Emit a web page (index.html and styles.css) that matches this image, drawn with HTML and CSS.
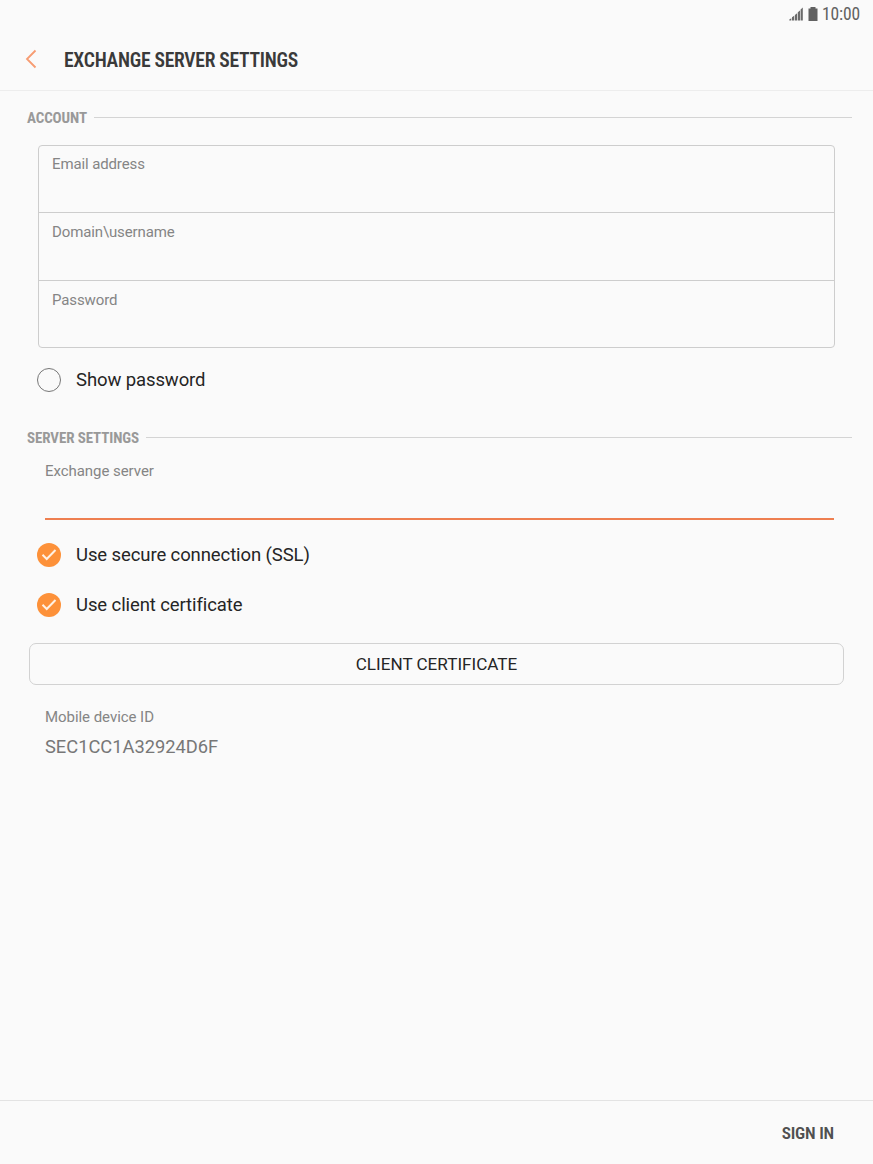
FILE: index.html
```html
<!DOCTYPE html>
<html lang="en">
<head>
    <meta charset="UTF-8">
    <meta name="viewport" content="width=device-width, initial-scale=1.0">
    <title>Exchange server settings</title>
    <link rel="stylesheet" href="styles.css">
</head>
<body>

<!-- Status bar -->
<div class="status-bar">
    <svg class="signal" width="14" height="14" viewBox="0 0 14 14" fill="#6a6a6a">
        <path d="M.3 13.500v-1l2-1.200v2.200zM3 13.500v-3.200l2.200-1.500v4.700zM5.900 13.500V8l2.200-1.700v7.200zM8.800 13.500V5.200l2.200-1.800v10.100zM11.600 13.500V2.500L13.800.6v12.900z"/>
    </svg>
    <svg class="battery" width="10" height="14" viewBox="0 0 10 14" fill="#616161">
        <path d="M2.500 0h5v1.500H9.500V14H.5V1.500h2z"/>
    </svg>
    <span class="clock condensed">10:00</span>
</div>

<!-- Title bar -->
<header class="title-bar">
    <svg class="back" width="12" height="20" viewBox="0 0 12 20" fill="none" stroke="#f79c72" stroke-width="1.8">
        <path d="M10.500 1.500L2 10l8.500 8.500"/>
    </svg>
    <h1 class="condensed">EXCHANGE SERVER SETTINGS</h1>
</header>

<main>
    <!-- Account -->
    <div class="section"><h2 class="condensed">ACCOUNT</h2></div>
    <div class="fields">
        <div class="field">Email address</div>
        <div class="field">Domain\username</div>
        <div class="field">Password</div>
    </div>
    <div class="option show-password">
        <span class="circle"></span>
        <span>Show password</span>
    </div>

    <!-- Server settings -->
    <div class="section"><h2 class="condensed">SERVER SETTINGS</h2></div>
    <div class="server-field">Exchange server</div>
    <div class="option ssl">
        <span class="circle checked"><svg width="24" height="24" viewBox="0 0 24 24"><path d="M5.500 11.800l4.200 4.200 8.800-9"/></svg></span>
        <span>Use secure connection (SSL)</span>
    </div>
    <div class="option">
        <span class="circle checked"><svg width="24" height="24" viewBox="0 0 24 24"><path d="M5.500 11.800l4.200 4.200 8.800-9"/></svg></span>
        <span>Use client certificate</span>
    </div>
    <button class="certificate">CLIENT CERTIFICATE</button>
    <div class="device">
        <div class="device-label">Mobile device ID</div>
        <div class="device-id">SEC1CC1A32924D6F</div>
    </div>
</main>

<footer class="bottom-bar">
    <button class="sign-in condensed">SIGN IN</button>
</footer>

</body>
</html>
```
FILE: styles.css
```css
* { box-sizing: border-box; }
body { margin: 0; height: 1164px; display: flex; flex-direction: column; background-color: #fafafa; color: #252525; font-family: Roboto, sans-serif; }
h1, h2 { margin: 0; }
button { padding: 0; border: none; background: none; font-family: inherit; cursor: pointer; }
.condensed { font-family: "Roboto Condensed", Roboto, sans-serif; font-stretch: 75%; white-space: nowrap; }

.status-bar { height: 28px; display: flex; align-items: center; padding-left: 789px; }
.battery { margin-left: 5px; }
.clock { margin-left: 4px; font-size: 17.5px; line-height: 20px; letter-spacing: -0.1px; color: #616161; }

.title-bar { height: 63px; display: flex; align-items: center; padding-left: 25px; border-bottom: 1px solid #ededed; }
.title-bar h1 { margin-left: 27px; padding-top: 2px; font-size: 19.6px; font-weight: 600; letter-spacing: -0.28px; color: #3a3a3a; }

main { flex: 1; }
.section { height: 54px; display: flex; align-items: center; padding: 0 21px 0 27px; }
.section::after { content: ""; flex: 1; height: 1px; margin: -2px 0 0 7px; background-color: #d4d4d4; }
.section h2 { font-size: 15px; letter-spacing: -0.1px; color: #999; }

.fields { height: 203px; margin: 0 38px; display: grid; grid-template-rows: 66px 68px 1fr; border: 1px solid #cdcdcd; border-radius: 4px; }
.field { padding: 9px 13px; font-size: 15px; line-height: 18px; letter-spacing: -0.12px; color: #858585; }
.field + .field { padding-top: 10px; border-top: 1px solid #cdcdcd; }

.option { height: 50px; display: flex; align-items: center; padding-left: 37px; font-size: 18.5px; letter-spacing: -0.1px; }
.circle { width: 24px; height: 24px; margin-right: 15px; border: 1px solid #777; border-radius: 50%; }
.circle.checked { border: none; background-color: #fd9139; }
.circle svg { display: block; fill: none; stroke: #fff1e4; stroke-width: 2; }
.show-password { height: 63px; }

.server-field { height: 58px; margin: -3px 39px 0 45px; font-size: 15px; line-height: 18px; letter-spacing: -0.05px; color: #858585; border-bottom: 2px solid #ee7f50; }
.ssl { margin-top: 10px; }
.certificate { display: block; width: 815px; height: 42px; margin: 13px 0 0 29px; border: 1px solid #d2d2d2; border-radius: 7px; font-size: 17.1px; color: #252525; }
.device { margin: 23px 0 0 45px; color: #858585; }
.device-label { font-size: 15px; line-height: 18px; letter-spacing: -0.05px; }
.device-id { margin-top: 10px; font-size: 18.3px; line-height: 22px; color: #777; }

.bottom-bar { height: 64px; display: flex; align-items: center; justify-content: flex-end; padding-right: 39px; border-top: 1px solid #e3e3e3; }
.sign-in { font-size: 17.3px; font-weight: 600; letter-spacing: -0.2px; color: #505050; }
```
